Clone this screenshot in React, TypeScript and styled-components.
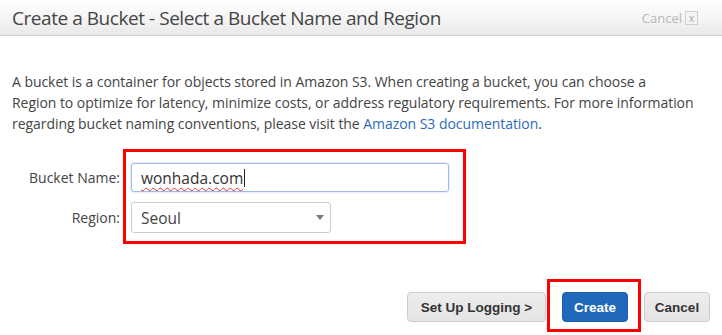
import { FC } from "react";
import styled, { createGlobalStyle } from "styled-components";

const GlobalStyle = createGlobalStyle`
  html, body {
    margin: 0;
    padding: 0;
    background: #fff;
  }
  body {
    font-family: "Open Sans", "Noto Sans", sans-serif;
    color: #444;
  }
`;

const StyledDialog = styled.div`
  width: 722px;
  height: 335px;
  display: flex;
  flex-direction: column;
  overflow: hidden;
`;

const StyledHeader = styled.header`
  height: 35px;
  display: flex;
  align-items: center;
  justify-content: space-between;
  padding: 0 24px 0 12px;
  background: linear-gradient(to bottom, #ffffff 0%, #f3f3f3 60%, #e9e9e9 100%);
  border-bottom: 1px solid #cfcfcf;
`;

const StyledTitle = styled.h3`
  margin: 0;
  font-family: "Open Sans", "Noto Sans", sans-serif;
  font-weight: 400;
  font-size: 19px;
  letter-spacing: -0.45px;
  color: #454545;
`;

const StyledClose = styled.button`
  display: flex;
  align-items: center;
  gap: 3px;
  border: 0;
  padding: 0;
  background: none;
  font-family: "Open Sans", "Noto Sans", sans-serif;
  font-size: 13px;
  color: #b8b8b8;
  cursor: pointer;
`;

const StyledCloseBox = styled.span`
  width: 11px;
  height: 12px;
  border: 1px solid #cfcfcf;
  background: #f4f4f4;
  display: flex;
  align-items: center;
  justify-content: center;
  font-size: 10px;
  line-height: 1;
  color: #a8a8a8;
`;

const StyledBody = styled.div`
  flex: 1;
  display: flex;
  flex-direction: column;
  padding: 35px 12px 0 12px;
`;

const StyledIntro = styled.p`
  margin: 0;
  font-size: 14px;
  line-height: 21px;
  letter-spacing: -0.05px;
  color: #444;
`;

const StyledLink = styled.a`
  color: #2a6bb8;
  text-decoration: none;
`;

const StyledForm = styled.div`
  display: flex;
  margin-top: 15px;
`;

const StyledLabels = styled.div`
  width: 108px;
  display: flex;
  flex-direction: column;
  align-items: flex-end;
  gap: 10px;
  padding-top: 14px;
  padding-right: 3px;
`;

const StyledLabel = styled.label<{ $h: number }>`
  height: ${(p) => p.$h}px;
  display: flex;
  align-items: center;
  font-size: 14px;
  color: #444;
`;

const StyledMarked = styled.div`
  width: 343px;
  box-sizing: border-box;
  border: 3px solid #ff0000;
  display: flex;
  flex-direction: column;
  gap: 10px;
  padding: 11px 14px 8px 5px;
`;

const StyledInput = styled.div`
  height: 29px;
  box-sizing: border-box;
  border: 1px solid #9dbbea;
  border-radius: 3px;
  box-shadow: 0 0 2px rgba(100, 150, 230, 0.5);
  display: flex;
  align-items: center;
  padding-left: 9px;
  font-size: 15.5px;
  color: #333;
`;

const StyledTyped = styled.span`
  text-decoration: underline wavy #e03030;
  text-decoration-thickness: 1px;
  text-underline-offset: 3px;
`;

const StyledCaret = styled.span`
  width: 1px;
  height: 18px;
  margin-left: 1px;
  background: #222;
`;

const StyledSelect = styled.div`
  width: 200px;
  height: 31px;
  box-sizing: border-box;
  border: 1px solid #cccccc;
  border-radius: 3px;
  display: flex;
  align-items: center;
  justify-content: space-between;
  padding: 0 6px 0 9px;
  font-size: 15.5px;
  color: #444;
`;

const StyledArrow = styled.span`
  width: 0;
  height: 0;
  border-left: 4px solid transparent;
  border-right: 4px solid transparent;
  border-top: 5px solid #777;
`;

const StyledFooter = styled.div`
  margin-top: auto;
  display: flex;
  justify-content: flex-end;
  align-items: flex-start;
  margin-bottom: 3px;
`;

const StyledButton = styled.button<{ $primary?: boolean }>`
  height: 30px;
  box-sizing: border-box;
  padding: 0;
  white-space: nowrap;
  border-radius: 4px;
  border: 1px solid ${(p) => (p.$primary ? "#1a5ea9" : "#cccccc")};
  background: ${(p) => (p.$primary ? "#1f68bb" : "linear-gradient(#ededed, #e4e4e4)")};
  color: ${(p) => (p.$primary ? "#ffffff" : "#333333")};
  font-family: "Liberation Sans", Arial, sans-serif;
  font-weight: 700;
  font-size: 13.5px;
  cursor: pointer;
`;

const StyledLoggingButton = styled(StyledButton)`
  width: 139px;
  margin-top: 13px;
`;

const StyledCancelButton = styled(StyledButton)`
  width: 66px;
  margin-top: 13px;
  margin-left: 3px;
`;

const StyledCreateMark = styled.div`
  border: 3px solid #ff0000;
  padding: 10px 10px 7px 12px;
  margin-left: 1px;
`;

const StyledCreateButton = styled(StyledButton)`
  width: 66px;
`;

const App: FC = (): JSX.Element => {
  return (
    <>
      <GlobalStyle />
      <StyledDialog>
        <StyledHeader>
          <StyledTitle>Create a Bucket - Select a Bucket Name and Region</StyledTitle>
          <StyledClose>
            Cancel
            <StyledCloseBox>x</StyledCloseBox>
          </StyledClose>
        </StyledHeader>
        <StyledBody>
          <StyledIntro>
            A bucket is a container for objects stored in Amazon S3. When creating a bucket, you can choose a
            <br />
            Region to optimize for latency, minimize costs, or address regulatory requirements. For more information
            <br />
            regarding bucket naming conventions, please visit the{" "}
            <StyledLink href="#">Amazon S3 documentation</StyledLink>.
          </StyledIntro>
          <StyledForm>
            <StyledLabels>
              <StyledLabel $h={29}>Bucket Name:</StyledLabel>
              <StyledLabel $h={31}>Region:</StyledLabel>
            </StyledLabels>
            <StyledMarked>
              <StyledInput>
                <StyledTyped>wonhada.com</StyledTyped>
                <StyledCaret />
              </StyledInput>
              <StyledSelect>
                Seoul
                <StyledArrow />
              </StyledSelect>
            </StyledMarked>
          </StyledForm>
          <StyledFooter>
            <StyledLoggingButton>Set Up Logging &gt;</StyledLoggingButton>
            <StyledCreateMark>
              <StyledCreateButton $primary>Create</StyledCreateButton>
            </StyledCreateMark>
            <StyledCancelButton>Cancel</StyledCancelButton>
          </StyledFooter>
        </StyledBody>
      </StyledDialog>
    </>
  );
};

export default App;
